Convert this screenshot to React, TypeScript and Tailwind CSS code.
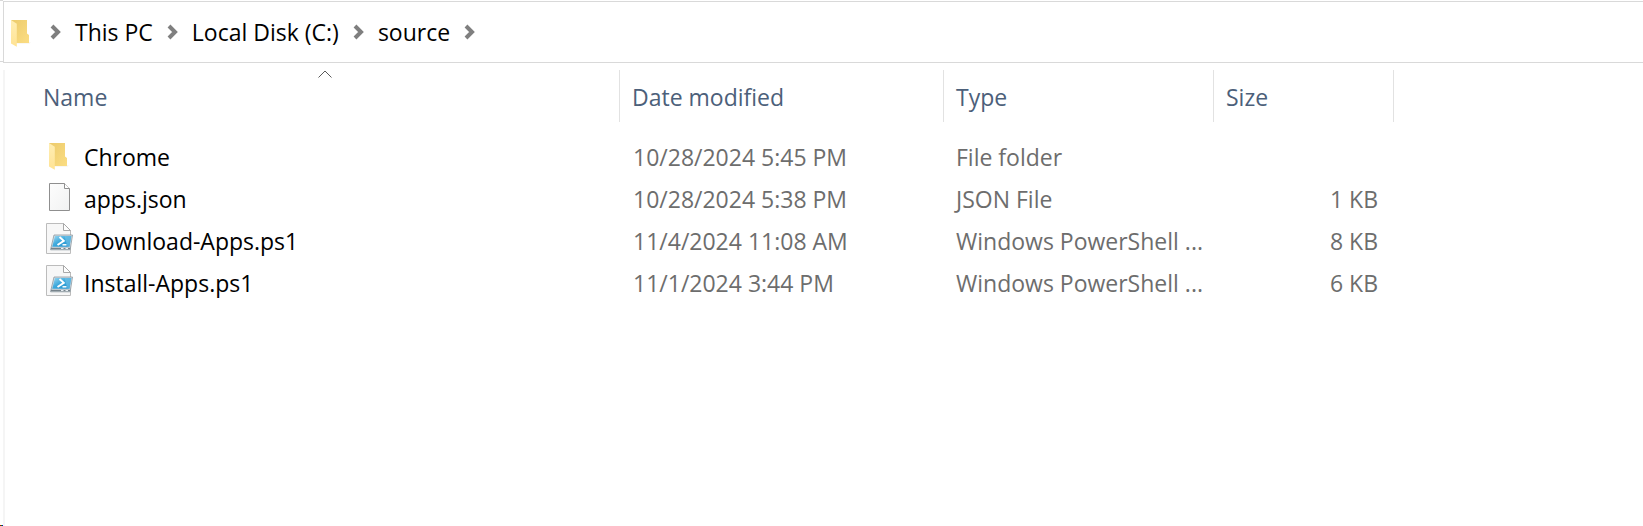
import type { ReactNode } from "react";

type Kind = "folder" | "file" | "script";

const crumbs = ["This PC", "Local Disk (C:)", "source"];

const files: { name: string; kind: Kind; date: string; type: string; size: string }[] = [
  { name: "Chrome", kind: "folder", date: "10/28/2024 5:45 PM", type: "File folder", size: "" },
  { name: "apps.json", kind: "file", date: "10/28/2024 5:38 PM", type: "JSON File", size: "1 KB" },
  { name: "Download-Apps.ps1", kind: "script", date: "11/4/2024 11:08 AM", type: "Windows PowerShell ...", size: "8 KB" },
  { name: "Install-Apps.ps1", kind: "script", date: "11/1/2024 3:44 PM", type: "Windows PowerShell ...", size: "6 KB" },
];

function FolderIcon() {
  return (
    <svg viewBox="0 0 32 32" className="size-8 shrink-0" aria-hidden="true">
      <defs>
        <linearGradient id="folderBack" x1="0" y1="0" x2="1" y2="1">
          <stop offset="0" stopColor="#eccb6c" />
          <stop offset="1" stopColor="#fbdd83" />
        </linearGradient>
        <linearGradient id="folderFlap" x1="0" y1="0" x2="0" y2="1">
          <stop offset="0" stopColor="#ffeeb4" />
          <stop offset="1" stopColor="#ffe394" />
        </linearGradient>
      </defs>
      <path d="M10 28.500H23.500L25 27.500H10Z" fill="#f3f0e8" />
      <path d="M5 5H21V18.500L23 20V28H9.500Z" fill="url(#folderBack)" />
      <path d="M5 5L10.800 8.700V31.700L5 28.500Z" fill="url(#folderFlap)" />
    </svg>
  );
}

function FileIcon() {
  return (
    <svg viewBox="0 0 32 32" className="size-8 shrink-0" aria-hidden="true">
      <defs>
        <linearGradient id="page" x1="0" y1="0" x2="1" y2="1">
          <stop offset="0" stopColor="#fdfdfd" />
          <stop offset="1" stopColor="#f1f2f2" />
        </linearGradient>
      </defs>
      <path d="M5.500 3.500H20.500L25.500 8.500V30.500H5.500Z" fill="url(#page)" stroke="#8f8f8f" />
      <path d="M20.500 3.500V8.500H25.500" fill="#fff" stroke="#8f8f8f" />
    </svg>
  );
}

function ScriptIcon() {
  return (
    <svg viewBox="0 0 32 32" className="size-8 shrink-0" aria-hidden="true">
      <defs>
        <linearGradient id="screen" x1="0" y1="0" x2="1" y2="1">
          <stop offset="0" stopColor="#9bd9f2" />
          <stop offset="0.450" stopColor="#3fa9dc" />
          <stop offset="1" stopColor="#1b8ccb" />
        </linearGradient>
      </defs>
      <path d="M2.500 1.500H19.500L26.500 8.500V31.500H2.500Z" fill="#f7f7f7" stroke="#bcbcbc" />
      <path d="M19.500 1.500V8.500H26.500Z" fill="#fdfdfd" stroke="#a8a8a8" />
      <path d="M10 13H28.500L26.200 27.800H6.500Z" fill="#d5dee4" stroke="#8d989f" strokeWidth="0.800" />
      <path d="M11 14H27.300L25.500 24.800H8.200Z" fill="url(#screen)" />
      <path d="M20.500 14H27.300L25.500 24.800H23.500Z" fill="#7cc7e9" opacity="0.550" />
      <path d="M15.500 15L19.800 18.800L13.500 23" fill="none" stroke="#fff" strokeWidth="1.900" />
      <path d="M18.500 22.800H22.500" stroke="#fff" strokeWidth="1.500" />
      <path d="M7 26.500H26" stroke="#77838b" strokeWidth="1.500" />
      <path d="M17 26.500H19.500M21.500 26.500H24" stroke="#e8eef2" />
    </svg>
  );
}

const icons: Record<Kind, ReactNode> = {
  folder: <FolderIcon />,
  file: <FileIcon />,
  script: <ScriptIcon />,
};

function Chevron() {
  return (
    <svg viewBox="0 0 11 16" className="h-4 w-[11px] shrink-0" aria-hidden="true">
      <path d="M2 2L8 8L2 14" fill="none" stroke="#7f7f7f" strokeWidth="4" />
    </svg>
  );
}

function HeaderCell({ label, sorted = false }: { label: string; sorted?: boolean }) {
  return (
    <th scope="col" aria-sort={sorted ? "ascending" : undefined} className="relative h-13 border-r border-[#e2e2e2] p-0 font-normal">
      {sorted && (
        <svg viewBox="0 0 14 8" className="absolute inset-x-0 top-0 mx-auto h-2 w-[14px]" aria-hidden="true">
          <path d="M0.500 7.500L7 1L13.500 7.500" fill="none" stroke="#5a5a5a" />
        </svg>
      )}
      <button type="button" className="block w-full px-3 pt-0.5 text-left text-[#4c607a]">
        {label}
      </button>
    </th>
  );
}

export default function App() {
  return (
    <div className="relative flex min-h-screen flex-col bg-white pt-px font-['Open_Sans','Noto_Sans',sans-serif] text-[23px] leading-8 text-black">
      <span className="absolute top-0 left-0 h-[62px] w-[3px] border-y border-[#d9d9d9]" />
      <nav aria-label="Path" className="ml-[3px] flex h-[62px] items-center border border-r-0 border-[#d9d9d9] pb-px">
        <div className="pb-0.5 pl-0.5">
          <FolderIcon />
        </div>
        <ol className="flex items-center gap-[14px] pl-3">
          <li className="flex">
            <Chevron />
          </li>
          {crumbs.map((crumb) => (
            <li key={crumb} className="flex items-center gap-[14px]">
              <a href="#">{crumb}</a>
              <Chevron />
            </li>
          ))}
        </ol>
      </nav>
      <main className="mt-[7px] ml-[3px] grow overflow-hidden border-l-2 border-[#f5f5f5] pl-[26px]">
        <table className="w-[1363px] table-fixed border-separate border-spacing-0 text-left">
          <colgroup>
            <col className="w-[589px]" />
            <col className="w-[324px]" />
            <col className="w-[270px]" />
            <col className="w-[180px]" />
          </colgroup>
          <thead>
            <tr>
              <HeaderCell label="Name" sorted />
              <HeaderCell label="Date modified" />
              <HeaderCell label="Type" />
              <HeaderCell label="Size" />
            </tr>
          </thead>
          <tbody className="text-[#6d6d6d] before:block before:h-[14px]">
            {files.map((file) => (
              <tr key={file.name} className="h-[42px] whitespace-nowrap">
                <td className="p-0 pl-[13px]">
                  <span className="flex gap-2">
                    <span className="-mt-[3px] h-8">{icons[file.kind]}</span>
                    <span className="text-black">{file.name}</span>
                  </span>
                </td>
                <td className="p-0 pl-[13px]">{file.date}</td>
                <td className="p-0 pl-3">{file.type}</td>
                <td className="p-0 pr-4 text-right">{file.size}</td>
              </tr>
            ))}
          </tbody>
        </table>
      </main>
      <span className="absolute bottom-0 left-0 flex h-px">
        <span className="w-px bg-[#c00000]" />
        <span className="w-px bg-[#00a000]" />
        <span className="w-px bg-[#0000c0]" />
      </span>
    </div>
  );
}
